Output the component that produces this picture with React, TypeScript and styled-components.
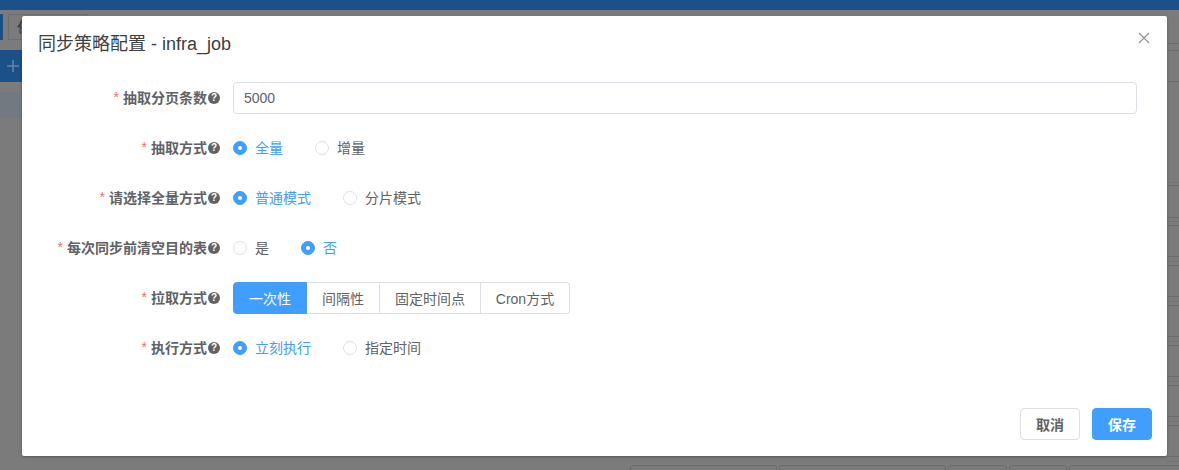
import React from "react";
import styled, { createGlobalStyle } from "styled-components";

const Global = createGlobalStyle`
  html, body { margin: 0; padding: 0; }
  body { width: 1179px; height: 470px; overflow: hidden; background: #7b7b7b;
    font-family: "Liberation Sans", "Noto Sans CJK SC", sans-serif; }
`;

const Page = styled.div`
  position: relative;
  width: 1179px;
  height: 470px;
  overflow: hidden;
  background: #7b7b7b;
`;
const TopBar = styled.div`
  height: 10px;
  background: #1b5088;
`;
const Tabs = styled.div`
  display: flex;
  gap: 5px;
  height: 26px;
  margin-top: 4px;
`;
const ActiveTab = styled.div`
  width: 3px;
  background: #1b5088;
`;
const Tab = styled.div`
  box-sizing: border-box;
  width: 80px;
  border: 1px solid #6d6d6d;
  font-size: 14px;
  line-height: 24px;
  padding-left: 8px;
  color: #333;
`;
const Toolbar = styled.div`
  display: flex;
  align-items: center;
  width: 200px;
  height: 32px;
  margin-top: 10px;
  padding-left: 7px;
  box-sizing: border-box;
  background: #1b5088;
  color: #5f86ae;
`;
const SelectedRow = styled.div`
  width: 200px;
  height: 26px;
  margin-top: 10px;
  background: #737980;
`;
const Overlay = styled.div`
  position: absolute;
  inset: 0;
  display: flex;
  justify-content: flex-start;
  align-items: flex-start;
  padding: 16px 0 0 22px;
`;
const Modal = styled.div`
  display: flex;
  flex-direction: column;
  width: 1145px;
  height: 440px;
  background: #fff;
  border-radius: 2px;
  box-shadow: 0 1px 3px rgba(0, 0, 0, 0.3);
`;
const Header = styled.div`
  display: flex;
  justify-content: space-between;
  padding: 16px 17px 0 16px;
  height: 66px;
  box-sizing: border-box;
`;
const Title = styled.div`
  font-size: 18px;
  line-height: 24px;
  color: #3c3e41;
`;
const Close = styled.div`
  display: flex;
  width: 12px;
  height: 12px;
  color: #909399;
`;
const Form = styled.div`
  display: flex;
  flex-direction: column;
  gap: 18px;
  padding-right: 30px;
`;
const Row = styled.div`
  display: flex;
  align-items: center;
  height: 32px;
`;
const Label = styled.div`
  display: flex;
  align-items: center;
  justify-content: flex-end;
  box-sizing: border-box;
  width: 198px;
  margin-right: 13px;
  padding-bottom: 2px;
  font-size: 14px;
  font-weight: 700;
  color: #606266;
  white-space: nowrap;
`;
const Star = styled.span`
  color: #f56c6c;
  font-weight: 400;
  margin-right: 4px;
`;
const Help = styled.span`
  display: inline-flex;
  align-items: center;
  justify-content: center;
  width: 12px;
  height: 12px;
  margin: 2px 0 0 1px;
  border-radius: 50%;
  background: #606266;
  color: #fff;
  font-size: 10px;
  line-height: 12px;
  font-weight: 700;
`;
const Input = styled.div`
  flex: 1;
  box-sizing: border-box;
  height: 32px;
  padding: 0 10px;
  border: 1px solid #dcdfe6;
  border-radius: 4px;
  font-size: 14px;
  line-height: 30px;
  color: #606266;
`;
const Radios = styled.div`
  display: flex;
  gap: 32px;
`;
const RadioItem = styled.div<{ $on?: boolean }>`
  display: flex;
  align-items: center;
  gap: 8px;
  font-size: 14px;
  line-height: 20px;
  color: ${(p) => (p.$on ? "#409eff" : "#606266")};
`;
const Dot = styled.span<{ $on?: boolean }>`
  box-sizing: border-box;
  width: 14px;
  height: 14px;
  border-radius: 50%;
  background: ${(p) => (p.$on ? "#409eff" : "#fff")};
  border: 1px solid ${(p) => (p.$on ? "#409eff" : "#dcdfe6")};
  display: flex;
  align-items: center;
  justify-content: center;
  &::after {
    content: "";
    width: 4px;
    height: 4px;
    border-radius: 50%;
    background: ${(p) => (p.$on ? "#fff" : "transparent")};
  }
`;
const Segments = styled.div`
  display: flex;
  height: 32px;
`;
const Segment = styled.div<{ $on?: boolean; $w: number }>`
  box-sizing: border-box;
  width: ${(p) => p.$w}px;
  display: flex;
  align-items: center;
  justify-content: center;
  font-size: 14px;
  color: ${(p) => (p.$on ? "#fff" : "#606266")};
  background: ${(p) => (p.$on ? "#409eff" : "#fff")};
  border: 1px solid ${(p) => (p.$on ? "#409eff" : "#dcdfe6")};
  border-left-width: ${(p) => (p.$on ? 1 : 0)}px;
  &:first-child { border-radius: 4px 0 0 4px; }
  &:last-child { border-radius: 0 4px 4px 0; }
`;
const Footer = styled.div`
  display: flex;
  justify-content: flex-end;
  gap: 12px;
  margin-top: auto;
  padding: 0 15px 16px 0;
`;
const Button = styled.div<{ $primary?: boolean }>`
  box-sizing: border-box;
  width: 60px;
  height: 32px;
  display: flex;
  align-items: center;
  justify-content: center;
  border-radius: 4px;
  font-size: 14px;
  font-weight: 700;
  color: ${(p) => (p.$primary ? "#fff" : "#606266")};
  background: ${(p) => (p.$primary ? "#409eff" : "#fff")};
  border: 1px solid ${(p) => (p.$primary ? "#409eff" : "#dcdfe6")};
`;
const BottomCells = styled.div`
  position: absolute;
  left: 630px;
  top: 465px;
  display: flex;
  gap: 2px;
`;
const Cell = styled.div<{ $w: number }>`
  width: ${(p) => p.$w}px;
  height: 12px;
  border: 1px solid #6b6b6b;
  border-radius: 3px;
  box-sizing: border-box;
`;
const EdgeLines = styled.div`
  position: absolute;
  left: 1167px;
  top: 0;
  width: 12px;
`;
const EdgeLine = styled.div<{ $gap: number; $faint?: boolean }>`
  height: 1px;
  margin-top: ${(p) => p.$gap}px;
  background: ${(p) => (p.$faint ? "#757575" : "#6c6c6c")};
`;

const edgeLines: { gap: number; faint?: boolean }[] = [
  { gap: 43 }, { gap: 6 }, { gap: 30 },
  { gap: 100, faint: true }, { gap: 2 },
  { gap: 31 }, { gap: 3, faint: true }, { gap: 3 },
  { gap: 30 }, { gap: 4, faint: true }, { gap: 3 },
  { gap: 30 }, { gap: 4, faint: true }, { gap: 3 },
  { gap: 30 }, { gap: 4, faint: true }, { gap: 3 },
  { gap: 30 }, { gap: 4, faint: true }, { gap: 3 },
  { gap: 30 }, { gap: 4, faint: true }, { gap: 3 },
  { gap: 30 }, { gap: 4, faint: true }, { gap: 3 },
];

const Field = ({ label, children }: { label: string; children: React.ReactNode }) => (
  <Row>
    <Label>
      <Star>*</Star>
      {label}
      <Help>?</Help>
    </Label>
    {children}
  </Row>
);

const Radio = ({ on, children }: { on?: boolean; children: React.ReactNode }) => (
  <RadioItem $on={on}>
    <Dot $on={on} />
    {children}
  </RadioItem>
);

export default function App() {
  return (
    <Page>
      <Global />
      <TopBar />
      <Tabs>
        <ActiveTab />
        <Tab>任</Tab>
      </Tabs>
      <Toolbar>
        <svg width="12" height="12" viewBox="0 0 12 12" stroke="currentColor" strokeWidth="1.6" fill="none">
          <path d="M0 6 H12 M6 0 V12" />
        </svg>
      </Toolbar>
      <SelectedRow />
      <EdgeLines>
        {edgeLines.map((l, i) => (
          <EdgeLine key={i} $gap={l.gap} $faint={l.faint} />
        ))}
      </EdgeLines>
      <BottomCells>
        <Cell $w={147} />
        <Cell $w={167} />
        <Cell $w={59} />
        <Cell $w={58} />
        <Cell $w={120} />
      </BottomCells>
      <Overlay>
        <Modal>
          <Header>
            <Title>同步策略配置 - infra_job</Title>
            <Close>
              <svg width="12" height="12" viewBox="0 0 12 12" fill="none" stroke="currentColor" strokeWidth="1.2">
                <path d="M1 1 L11 11 M11 1 L1 11" />
              </svg>
            </Close>
          </Header>
          <Form>
            <Field label="抽取分页条数">
              <Input>5000</Input>
            </Field>
            <Field label="抽取方式">
              <Radios>
                <Radio on>全量</Radio>
                <Radio>增量</Radio>
              </Radios>
            </Field>
            <Field label="请选择全量方式">
              <Radios>
                <Radio on>普通模式</Radio>
                <Radio>分片模式</Radio>
              </Radios>
            </Field>
            <Field label="每次同步前清空目的表">
              <Radios>
                <Radio>是</Radio>
                <Radio on>否</Radio>
              </Radios>
            </Field>
            <Field label="拉取方式">
              <Segments>
                <Segment $on $w={74}>一次性</Segment>
                <Segment $w={73}>间隔性</Segment>
                <Segment $w={101}>固定时间点</Segment>
                <Segment $w={89}>Cron方式</Segment>
              </Segments>
            </Field>
            <Field label="执行方式">
              <Radios>
                <Radio on>立刻执行</Radio>
                <Radio>指定时间</Radio>
              </Radios>
            </Field>
          </Form>
          <Footer>
            <Button>取消</Button>
            <Button $primary>保存</Button>
          </Footer>
        </Modal>
      </Overlay>
    </Page>
  );
}
